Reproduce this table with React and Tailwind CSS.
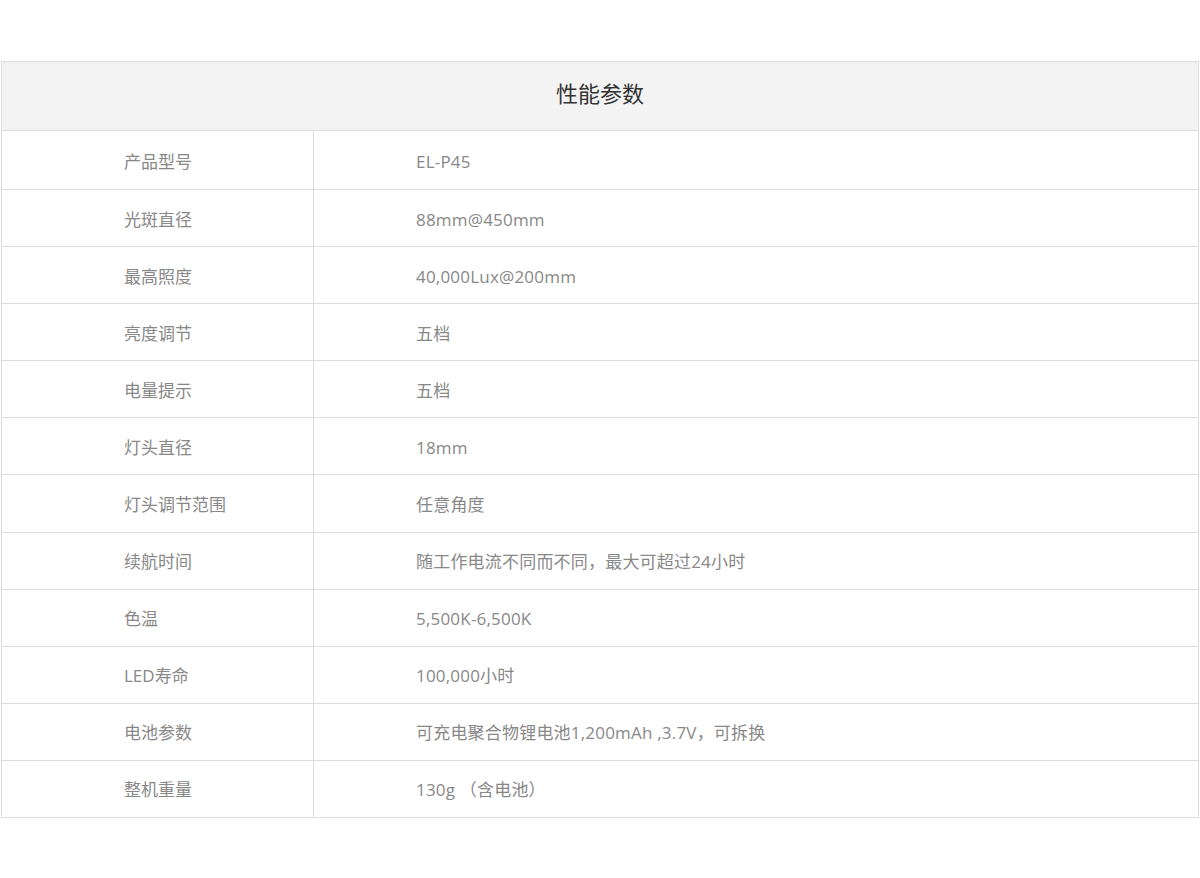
import React from "react";

const specs = [
  ["产品型号", "EL-P45"],
  ["光斑直径", "88mm@450mm"],
  ["最高照度", "40,000Lux@200mm"],
  ["亮度调节", "五档"],
  ["电量提示", "五档"],
  ["灯头直径", "18mm"],
  ["灯头调节范围", "任意角度"],
  ["续航时间", "随工作电流不同而不同，最大可超过24小时"],
  ["色温", "5,500K-6,500K"],
  ["LED寿命", "100,000小时"],
  ["电池参数", "可充电聚合物锂电池1,200mAh ,3.7V，可拆换"],
  ["整机重量", "130g （含电池）"],
];

const App = () => {
  return (
    <div
      className="w-[1200px] h-[878px] bg-white pt-[61px] pl-px"
      style={{ fontFamily: '"Open Sans", "Noto Sans CJK SC", sans-serif' }}
    >
      <table className="w-[1198px] border-collapse">
        <thead>
          <tr>
            <th
              colSpan={2}
              className="h-[69px] pb-[5px] bg-[#f3f3f3] border border-[#dcdcdc] text-[22px] font-normal text-[#333] text-center"
            >
              性能参数
            </th>
          </tr>
        </thead>
        <tbody>
          {specs.map(([label, value], i) => (
            <tr key={label} className={i === 0 ? "h-[59px]" : "h-[57.1px]"}>
              <td className="w-[312px] border border-[#dcdcdc] pl-[122px] pt-[2px] text-left text-[17px] text-[#888] leading-none">
                {label}
              </td>
              <td className="border border-[#dcdcdc] pl-[102px] pt-[2px] text-[17px] text-[#888] leading-none tracking-[0.2px]">
                {value}
              </td>
            </tr>
          ))}
        </tbody>
      </table>
    </div>
  );
};

export default App;
